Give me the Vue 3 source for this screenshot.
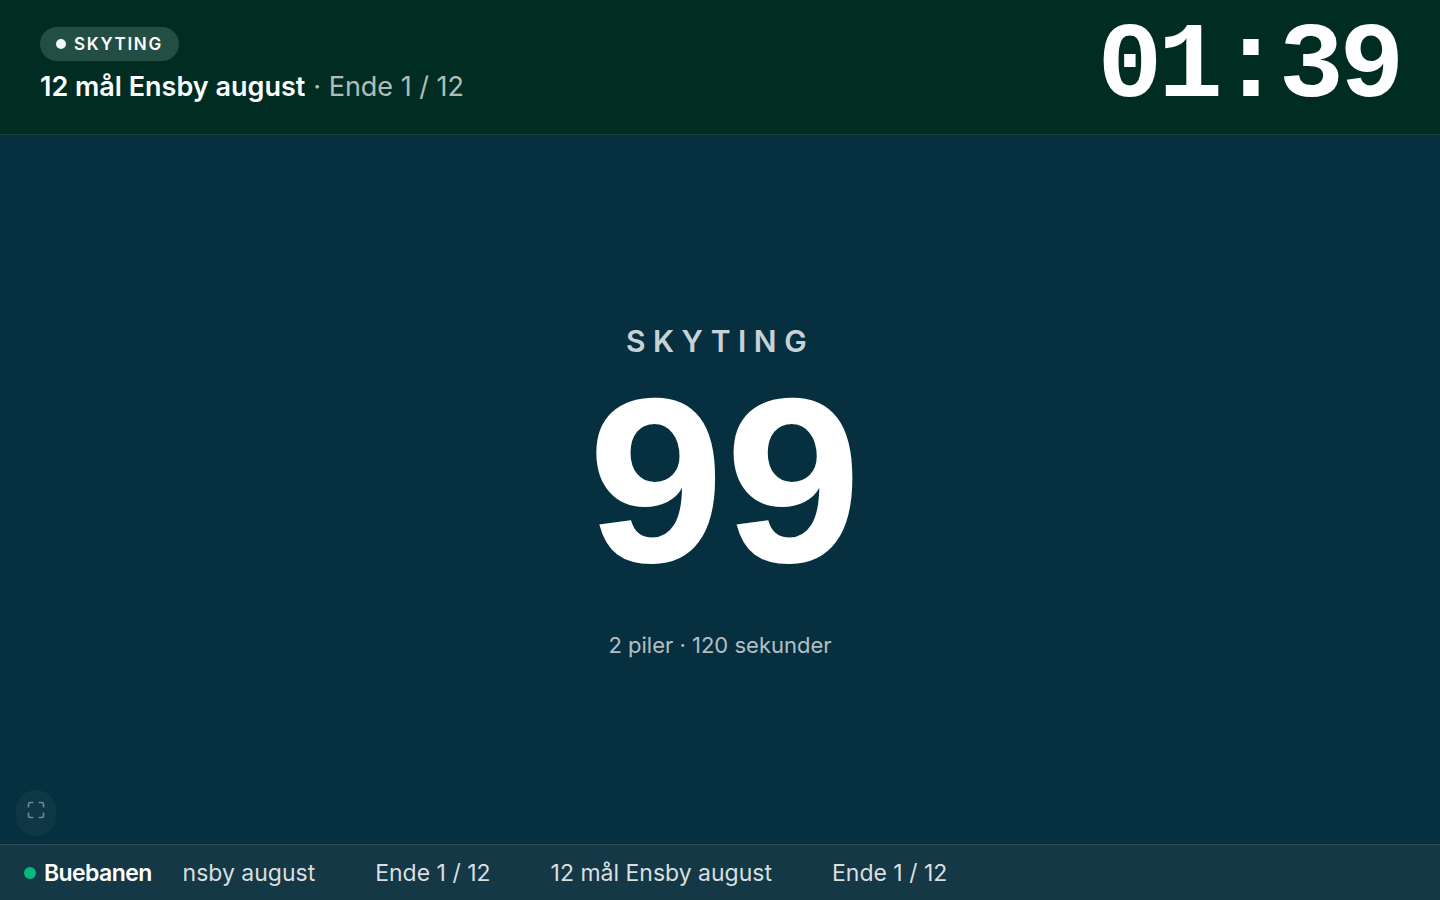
<script setup>
const round = { phase: 'SKYTING', title: '12 mål Ensby august', end: 'Ende 1 / 12', clock: '01:39', seconds: '99' }
const ticker = [round.title, round.end, round.title, round.end]
</script>

<template>
  <div class="board">
    <header class="top">
      <div class="info">
        <span class="pill"><i class="pill-dot"></i>{{ round.phase }}</span>
        <h1 class="title"><span>{{ round.title }}</span><span class="end">· {{ round.end }}</span></h1>
      </div>
      <time class="clock">{{ round.clock }}</time>
    </header>

    <main class="stage">
      <p class="phase">{{ round.phase }}</p>
      <p class="count">{{ round.seconds }}</p>
      <p class="detail">2 piler · 120 sekunder</p>
      <button class="fullscreen" type="button" aria-label="Fullskjerm">
        <svg width="20" height="20" viewBox="0 0 24 24" fill="none" stroke="currentColor" stroke-width="2" stroke-linecap="round" stroke-linejoin="round">
          <path d="M8 3H5a2 2 0 0 0-2 2v3" />
          <path d="M21 8V5a2 2 0 0 0-2-2h-3" />
          <path d="M3 16v3a2 2 0 0 0 2 2h3" />
          <path d="M16 21h3a2 2 0 0 0 2-2v-3" />
        </svg>
      </button>
    </main>

    <footer class="bar">
      <div class="brand"><i class="live"></i>Buebanen</div>
      <div class="ticker">
        <div class="track">
          <span v-for="(item, i) in ticker" :key="i">{{ item }}</span>
        </div>
      </div>
    </footer>
  </div>
</template>

<style>
html, body { margin: 0; background: #06303f; }
</style>

<style scoped>
.board {
  display: flex;
  flex-direction: column;
  height: 100vh;
  overflow: hidden;
  background: #06303f;
  color: #fff;
  font-family: Inter, "Liberation Sans", sans-serif;
}
.top {
  display: flex;
  align-items: center;
  justify-content: space-between;
  padding: 13px 40px;
  background: #002c22;
  border-bottom: 1px solid #14402f;
}
.info {
  display: flex;
  flex-direction: column;
  align-items: flex-start;
  gap: 6px;
}
.pill {
  display: flex;
  align-items: center;
  gap: 8px;
  padding: 4px 16px;
  border-radius: 999px;
  background: #234e44;
  font-size: 17px;
  line-height: 26px;
  font-weight: 600;
  letter-spacing: 0.1em;
}
.pill-dot {
  width: 10px;
  height: 10px;
  border-radius: 50%;
  background: rgba(255, 255, 255, 0.95);
}
.title {
  display: flex;
  gap: 8px;
  margin: 0;
  font-size: 27px;
  line-height: 40px;
  font-weight: 600;
}
.end { font-weight: 400; color: rgba(255, 255, 255, 0.7); }
.clock {
  font-family: "Liberation Mono", monospace;
  font-size: 108px;
  line-height: 108px;
  font-weight: 700;
  letter-spacing: -0.04em;
}
.stage {
  position: relative;
  flex: 1;
  display: flex;
  flex-direction: column;
  align-items: center;
  justify-content: center;
}
.stage p { margin: 0; }
.phase {
  font-size: 30px;
  line-height: 46px;
  font-weight: 600;
  letter-spacing: 0.25em;
  color: rgba(255, 255, 255, 0.8);
}
.stage .count {
  margin-top: 11px;
  font-family: "Liberation Mono", monospace;
  font-size: 245px;
  line-height: 245px;
  font-weight: 700;
  letter-spacing: -0.04em;
}
.stage .detail {
  margin-top: 8px;
  font-size: 22px;
  line-height: 34px;
  color: rgba(255, 255, 255, 0.7);
}
.fullscreen {
  position: absolute;
  left: 16px;
  bottom: 8px;
  width: 40px;
  padding: 10px 10px 16px;
  border: 0;
  border-radius: 999px;
  background: rgba(255, 255, 255, 0.04);
  color: rgba(255, 255, 255, 0.4);
}
.fullscreen svg { display: block; }
.bar {
  display: flex;
  align-items: center;
  gap: 32px;
  height: 55px;
  padding-left: 24px;
  background: #143845;
  border-top: 1px solid #2b4f59;
  font-size: 23px;
  line-height: 34px;
}
.brand {
  display: flex;
  align-items: center;
  gap: 8px;
  font-weight: 600;
  letter-spacing: -0.025em;
}
.live {
  width: 12px;
  height: 12px;
  border-radius: 50%;
  background: #00bc7d;
}
.ticker {
  flex: 1;
  overflow: hidden;
  color: rgba(255, 255, 255, 0.85);
}
.track {
  display: flex;
  gap: 60px;
  margin-left: -90px;
  white-space: nowrap;
}
</style>
